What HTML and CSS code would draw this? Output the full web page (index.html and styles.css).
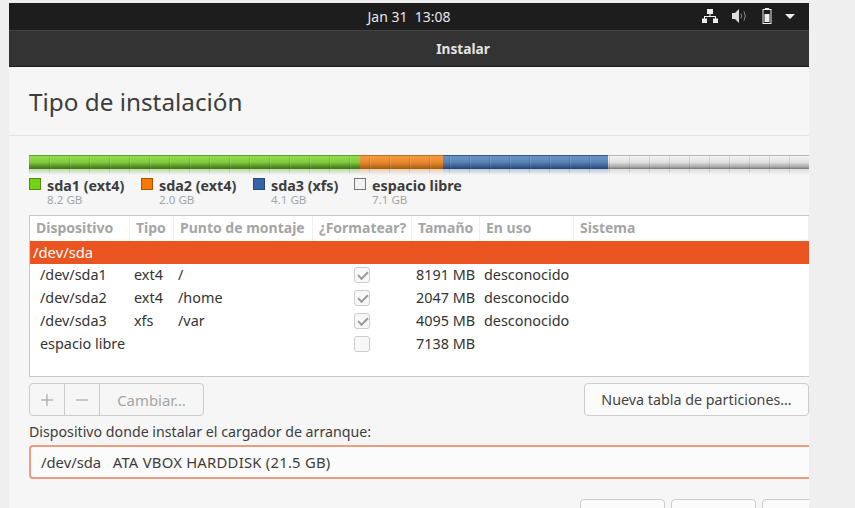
FILE: index.html
```html
<!DOCTYPE html>
<html lang="es">
<head>
<meta charset="UTF-8" />
<title>Instalar</title>
<link rel="stylesheet" href="styles.css">
</head>
<body>
<div class="window">
  <div class="topbar">
    <span class="clock">Jan 31&nbsp;&nbsp;13:08</span>
    <div class="tray">
      <svg class="ico-net" width="16" height="14" viewBox="0 0 16 14"><path fill="#eee" d="M5 0h6v5H8.500v2H14v2.500h2V14h-5V9.500h2V8H3v1.500h2V14H0V9.500h2V7h5.500V5H5z"/></svg>
      <svg class="ico-vol" width="15" height="14" viewBox="0 0 15 14"><path fill="#ddd" d="M0 4h3l4-4v14l-4-4H0z"/><path fill="none" stroke="#888" d="M9 4.500q1.500 2.500 0 5M12 2.500q2.500 4.500 0 9"/></svg>
      <svg class="ico-bat" width="10" height="16" viewBox="0 0 10 16"><path fill="#eee" d="M3 0h4v1h2.500v15H.5V1H3zM1.500 2v13h7V2z"/><path fill="#eee" d="M2.500 6h5v8h-5z"/></svg>
      <span class="caret"></span>
    </div>
  </div>
  <header class="titlebar">Instalar</header>

  <main class="content">
    <h1>Tipo de instalación</h1>
    <div class="pad">
      <div class="bar">
        <div class="seg green"></div>
        <div class="seg orange"></div>
        <div class="seg blue"></div>
        <div class="seg free"></div>
      </div>

      <div class="legend">
        <div class="item i1"><span class="swatch s-green"></span><div><b>sda1 (ext4)</b><small>8.2 GB</small></div></div>
        <div class="item i2"><span class="swatch s-orange"></span><div><b>sda2 (ext4)</b><small>2.0 GB</small></div></div>
        <div class="item i3"><span class="swatch s-blue"></span><div><b>sda3 (xfs)</b><small>4.1 GB</small></div></div>
        <div class="item"><span class="swatch s-free"></span><div><b>espacio libre</b><small>7.1 GB</small></div></div>
      </div>

      <div class="table">
        <div class="row head">
          <span>Dispositivo</span><span>Tipo</span><span>Punto de montaje</span><span>¿Formatear?</span><span>Tamaño</span><span>En uso</span><span>Sistema</span>
        </div>
        <div class="disk">/dev/sda</div>
        <div class="row part">
          <span>/dev/sda1</span><span>ext4</span><span>/</span><span class="chk on"></span><span>8191 MB</span><span>desconocido</span><span></span>
        </div>
        <div class="row part">
          <span>/dev/sda2</span><span>ext4</span><span>/home</span><span class="chk on"></span><span>2047 MB</span><span>desconocido</span><span></span>
        </div>
        <div class="row part">
          <span>/dev/sda3</span><span>xfs</span><span>/var</span><span class="chk on"></span><span>4095 MB</span><span>desconocido</span><span></span>
        </div>
        <div class="row part">
          <span class="wide">espacio libre</span><span class="chk"></span><span>7138 MB</span><span></span><span></span>
        </div>
      </div>

      <div class="tools">
        <div class="btn-group">
          <button class="sq" aria-label="Añadir"><svg width="12" height="12" viewBox="0 0 12 12"><path stroke="#999" d="M6 0v12M0 6h12"/></svg></button>
          <button class="sq" aria-label="Quitar"><svg width="12" height="12" viewBox="0 0 12 12"><path stroke="#999" d="M0 6h12"/></svg></button>
          <button class="change">Cambiar…</button>
        </div>
        <button class="btn new">Nueva tabla de particiones…</button>
      </div>

      <label class="boot-label">Dispositivo donde instalar el cargador de arranque:</label>
      <div class="combo">/dev/sda&nbsp;&nbsp;&nbsp;<span class="combo-desc">ATA VBOX HARDDISK (21.5 GB)</span></div>

      <div class="actions">
        <button class="btn act"></button>
        <button class="btn act"></button>
        <button class="btn act"></button>
      </div>
    </div>
  </main>
</div>
</body>
</html>
```

FILE: styles.css
```css
html, body {
  margin: 0;
  padding: 0;
  height: 508px;
  overflow: hidden;
  background: #efefef;
  font-family: "Noto Sans", sans-serif;
}
.window {
  margin: 0 0 0 9px;
  padding-top: 3px;
  width: 800px;
  height: 505px;
  overflow: hidden;
}
.topbar {
  height: 27px;
  background: #1d1d1d;
  display: flex;
  align-items: center;
  justify-content: center;
  position: relative;
  color: #e6e6e6;
  font-size: 14px;
  box-sizing: border-box;
}
.tray {
  position: absolute;
  right: 14px;
  top: 5px;
  display: flex;
  align-items: center;
  height: 16px;
}
.ico-vol { margin-left: 14px; }
.ico-bat { margin-left: 15px; }
.caret {
  margin-left: 13px;
  width: 0;
  height: 0;
  border-left: 5px solid transparent;
  border-right: 5px solid transparent;
  border-top: 5px solid #eee;
}
.titlebar {
  height: 37px;
  box-sizing: border-box;
  background: #333;
  border-top: 1px solid #444;
  border-bottom: 1px solid #1d1d1d;
  color: #e4e4e4;
  font-size: 13.700px;
  font-weight: bold;
  display: flex;
  align-items: center;
  justify-content: center;
  padding-left: 108px;
}
.content {
  background: #f6f6f6;
  height: 441px;
}
h1 {
  margin: 0;
  height: 69px;
  box-sizing: border-box;
  padding: 18px 0 0 20px;
  border-bottom: 1px solid #e3e3e3;
  font-size: 24.300px;
  line-height: 34px;
  font-weight: normal;
  color: #3d3d3d;
}
.pad {
  padding: 19px 0 0 20px;
}
.bar {
  display: flex;
  height: 20px;
  position: relative;
}
.bar::after {
  content: "";
  position: absolute;
  left: 0;
  top: 1px;
  right: 0;
  height: 17px;
  background: repeating-linear-gradient(90deg, rgba(0,0,0,.1) 0, rgba(0,0,0,.1) 1px, rgba(255,255,255,.1) 1px, rgba(255,255,255,.1) 2px, transparent 2px, transparent 20px);
}
.seg {
  height: 20px;
}
.seg::before {
  content: "";
  display: block;
  height: 14px;
  background: var(--fill);
}
.seg::after {
  content: "";
  display: block;
  height: 6px;
  background: linear-gradient(var(--glow), rgba(246,246,246,0));
}
.green { width: 331px; --fill: linear-gradient(#5f9e2c, #5f9e2c 7%, #93db4d 8%, #86cc42 50%, #4c8a1c 85%, #3f7414); --glow: rgba(95,150,40,.35); }
.orange { width: 83px; --fill: linear-gradient(#c46f1e, #c46f1e 7%, #f59a3e 8%, #e88b30 50%, #b96a18 85%, #a65a10); --glow: rgba(200,110,30,.3); }
.blue { width: 165px; --fill: linear-gradient(#36598c, #36598c 7%, #6a94c6 8%, #5a83b6 50%, #34598c 85%, #26436e); --glow: rgba(50,90,150,.3); }
.free { width: 201px; --fill: linear-gradient(#b5b5b5, #b5b5b5 7%, #f3f3f3 8%, #e2e2e2 50%, #a8a8a8 85%, #777); --glow: rgba(120,120,120,.2); }
.legend {
  display: flex;
  margin-top: 3px;
}
.item {
  display: flex;
  align-items: flex-start;
}
.i1, .i2 { width: 112px; }
.i3 { width: 101px; }
.swatch {
  width: 12px;
  height: 12px;
  box-sizing: border-box;
  border: 1px solid #555;
  margin: 0 6px 0 0;
}
.s-green { background: #73d216; border-color: #4e8f0e; }
.s-orange { background: #f57900; border-color: #a85300; }
.s-blue { background: #3465a4; border-color: #234a7c; }
.s-free { background: #f2f2f2; border-color: #777; }
.item b {
  display: block;
  font-size: 14.300px;
  line-height: 15px;
  color: #3d3d3d;
}
.item small {
  display: block;
  font-size: 11.600px;
  line-height: 14px;
  color: #a5a5a5;
}
.table {
  margin-top: 8px;
  height: 162px;
  box-sizing: border-box;
  background: #fff;
  border: 1px solid #c8c8c8;
  border-right: 0;
}
.row {
  display: grid;
  grid-template-columns: 100px 44px 139px 99px 68px 94px 1fr;
  align-items: start;
}
.head {
  height: 25px;
  color: #a5a5a5;
  font-size: 14px;
  font-weight: bold;
}
.head span {
  height: 25px;
  line-height: 23px;
  padding-left: 6px;
  box-sizing: border-box;
  border-right: 1px solid #f0f0f0;
  white-space: nowrap;
}
.disk {
  height: 23px;
  line-height: 23px;
  background: #e95420;
  color: #fff;
  font-size: 14.800px;
  padding-left: 3px;
}
.part {
  height: 23px;
  line-height: 22px;
  font-size: 14.400px;
  color: #333;
}
.part span {
  padding-left: 4px;
  white-space: nowrap;
}
.part span:first-child {
  padding-left: 10px;
}
.part .wide {
  grid-column: span 3;
}
.part .chk {
  width: 16px;
  height: 16px;
  box-sizing: border-box;
  padding: 0;
  margin: 3px 0 0 41px;
  border: 1px solid #ccc;
  border-radius: 3px;
  background: #f8f8f8;
  position: relative;
}
.chk.on::after {
  content: "";
  position: absolute;
  left: 3px;
  top: 2px;
  width: 8px;
  height: 4px;
  border-left: 2px solid #999;
  border-bottom: 2px solid #999;
  transform: rotate(-45deg) translate(-1px, 1px);
}
.tools {
  display: flex;
  justify-content: space-between;
  margin-top: 6px;
}
button {
  font-family: inherit;
}
.btn-group {
  display: flex;
  height: 33px;
  box-sizing: border-box;
  border: 1px solid #ccc;
  border-radius: 4px;
  background: #f6f6f6;
}
.btn-group button {
  background: none;
  border: 0;
  border-right: 1px solid #ccc;
  padding: 0;
  color: #a5a5a5;
  font-size: 14.900px;
}
.btn-group .sq {
  width: 35px;
  display: flex;
  align-items: center;
  justify-content: center;
}
.btn-group .change {
  width: 103px;
  border-right: 0;
}
.btn {
  background: #fbfbfb;
  border: 1px solid #ccc;
  border-radius: 4px;
  color: #444;
  font-size: 14.300px;
  padding: 0;
}
.new {
  width: 225px;
  height: 33px;
}
.boot-label {
  display: block;
  margin-top: 6px;
  font-size: 14.200px;
  line-height: 19px;
  color: #3d3d3d;
}
.combo {
  margin-top: 4px;
  height: 34px;
  box-sizing: border-box;
  line-height: 30px;
  padding-left: 10px;
  background: #fbfbfb;
  border: 2px solid #ee9c80;
  border-right: 0;
  border-radius: 4px 0 0 4px;
  font-size: 14.800px;
  color: #3d3d3d;
}
.combo-desc {
  letter-spacing: 0.25px;
}
.actions {
  display: flex;
  gap: 6px;
  margin: 20px 0 0 551px;
}
.act {
  width: 85px;
  height: 33px;
  flex: none;
}
```
